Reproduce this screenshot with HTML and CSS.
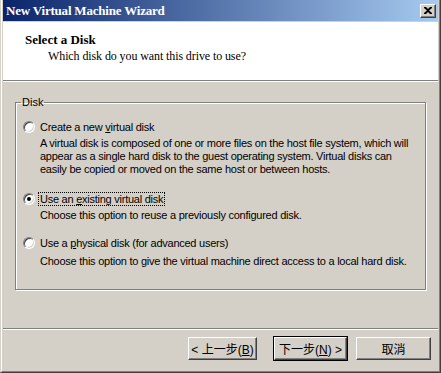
FILE: index.html
```html
<!DOCTYPE html>
<html lang="en">
<head>
  <meta charset="UTF-8">
  <title>New Virtual Machine Wizard</title>
  <link rel="stylesheet" href="styles.css">
</head>
<body>
  <div class="window">
    <div class="window-inner">
      <!-- title bar -->
      <div class="titlebar">
        <span class="title">New Virtual Machine Wizard</span>
        <span class="close-btn">
          <svg width="8" height="7" viewBox="0 0 8 7">
            <path d="M0 0h2l2 2 2-2h2v1l-3 2.5 3 2.5v1h-2l-2-2-2 2h-2v-1l3-2.5-3-2.5z" fill="#000"/>
          </svg>
        </span>
      </div>

      <!-- wizard header -->
      <div class="header">
        <div class="header-title">Select a Disk</div>
        <div class="header-sub">Which disk do you want this drive to use?</div>
      </div>

      <div class="content">
        <fieldset class="group">
          <legend>Disk</legend>

          <div class="option first">
            <span class="radio"></span>
            <span class="option-label">Create a new <u>v</u>irtual disk</span>
          </div>
          <p class="option-desc">A virtual disk is composed of one or more files on the host file system, which will<br>appear as a single hard disk to the guest operating system. Virtual disks can<br>easily be copied or moved on the same host or between hosts.</p>

          <div class="option second">
            <span class="radio checked"></span>
            <span class="option-label focused">Use an <u>e</u>xisting virtual disk</span>
          </div>
          <p class="option-desc">Choose this option to reuse a previously configured disk.</p>

          <div class="option third">
            <span class="radio"></span>
            <span class="option-label">Use a <u>p</u>hysical disk (for advanced users)</span>
          </div>
          <p class="option-desc last">Choose this option to give the virtual machine direct access to a local hard disk.</p>
        </fieldset>
      </div>

      <div class="footer">
        <button class="btn back">&lt; 上一步(<u>B</u>)</button>
        <button class="btn default">下一步(<u>N</u>) &gt;</button>
        <button class="btn cancel">取消</button>
      </div>
    </div>
  </div>
</body>
</html>
```

FILE: styles.css
```css
body {
  margin: 0;
  background: #d4d0c8;
  font-family: "Liberation Sans", Arial, sans-serif;
  font-size: 11px;
  color: #000;
}

.window {
  width: 441px;
  height: 373px;
  box-sizing: border-box;
  border-left: 1px solid #d4d0c8;
  border-right: 1px solid #404040;
  border-bottom: 1px solid #404040;
}

.window-inner {
  height: 100%;
  box-sizing: border-box;
  border-left: 1px solid #fff;
  border-right: 1px solid #808080;
  border-bottom: 1px solid #808080;
  padding: 0 1px 0 1px;
  display: flex;
  flex-direction: column;
}

/* title bar */
.titlebar {
  height: 21px;
  flex-shrink: 0;
  background: linear-gradient(to right, #0a246a, #a6caf0);
  display: flex;
  align-items: center;
  justify-content: space-between;
  padding: 0 2px 0 2px;
}

.title {
  font-family: "Liberation Serif", "Times New Roman", serif;
  font-weight: bold;
  font-size: 13px;
  letter-spacing: -0.2px;
  color: #fff;
  padding-left: 1px;
}

.close-btn {
  width: 16px;
  height: 14px;
  box-sizing: border-box;
  background: #d4d0c8;
  border: 1px solid;
  border-color: #fff #404040 #404040 #fff;
  box-shadow: inset -1px -1px 0 #808080;
  display: flex;
  align-items: center;
  justify-content: center;
}

/* header */
.header {
  background: #fff;
  height: 59px;
  flex-shrink: 0;
  margin-top: 1px;
  box-sizing: border-box;
  border-bottom: 1px solid #808080;
  box-shadow: 0 1px 0 #fff;
  padding: 10px 0 0 22px;
  font-family: "Liberation Serif", "Times New Roman", serif;
  font-size: 12px;
}

.header-title {
  font-weight: bold;
  font-size: 13px;
}

.header-sub {
  margin: 1px 0 0 23px;
  letter-spacing: -0.1px;
}

/* content */
.content {
  height: 247px;
  flex-shrink: 0;
  box-sizing: border-box;
  padding: 15px 12px 0 12px;
}

.group {
  margin: 0;
  height: 194px;
  box-sizing: border-box;
  border: 1px solid #808080;
  box-shadow: 1px 1px 0 #fff, inset 1px 1px 0 #fff;
  padding: 0 8px 0 7px;
  letter-spacing: -0.25px;
}

.group legend {
  padding: 0 1px;
  margin-left: -2px;
  letter-spacing: 0;
}

.option {
  display: flex;
  align-items: center;
  height: 17px;
}

.option.first {
  margin-top: 10px;
}

.option.second {
  margin-top: 14px;
}

.option.third {
  margin-top: 12px;
}

.radio {
  width: 12px;
  height: 12px;
  box-sizing: border-box;
  border-radius: 50%;
  background: #fff;
  border: 1px solid;
  border-color: #808080 #fff #fff #808080;
  box-shadow: inset 1px 1px 0 #404040, inset -1px -1px 0 #d4d0c8;
  margin-right: 4px;
  position: relative;
  flex-shrink: 0;
}

.radio.checked::after {
  content: "";
  position: absolute;
  left: 3px;
  top: 3px;
  width: 4px;
  height: 4px;
  border-radius: 50%;
  background: #000;
}

.option-label {
  padding: 0 1px;
}

.option-label.focused {
  outline: 1px dotted #000;
}

.option-desc {
  margin: 2px 0 0 17px;
  line-height: 13px;
  white-space: nowrap;
}

.option-desc.last {
  margin-top: 4px;
}

/* footer */
.footer {
  flex: 1;
  border-top: 1px solid #808080;
  box-shadow: inset 0 1px 0 #fff;
  display: flex;
  justify-content: flex-end;
  align-items: flex-start;
  padding: 8px 7px 0 0;
}

.btn {
  width: 75px;
  height: 23px;
  background: #d4d0c8;
  border: 1px solid;
  border-color: #fff #404040 #404040 #fff;
  box-shadow: inset -1px -1px 0 #808080;
  font-family: "Liberation Sans", "Noto Sans CJK TC", sans-serif;
  font-size: 12px;
  padding: 0;
  color: #000;
}

.btn.back {
  width: 69px;
}

.btn.default {
  margin-left: 17px;
  width: 73px;
  outline: 1px solid #000;
}

.btn.cancel {
  margin-left: 9px;
}
```
